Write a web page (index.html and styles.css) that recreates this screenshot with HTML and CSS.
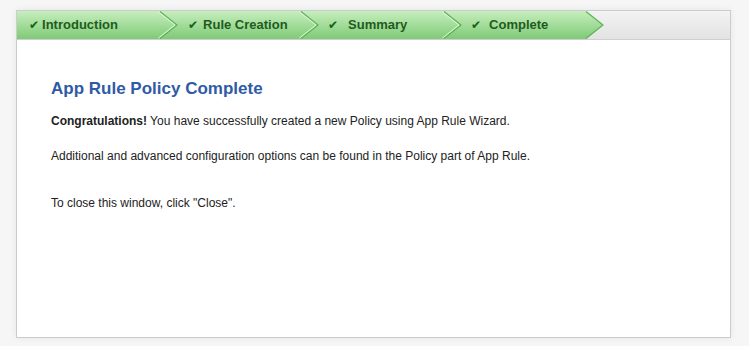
FILE: index.html
```html
<!DOCTYPE html>
<html>
<head>
<meta charset="utf-8">
<link rel="stylesheet" href="styles.css">
</head>
<body>
<div class="wizard">
  <div class="steps">
    <div class="step step-1"><span class="check">✔</span><span class="label">Introduction</span>
      <svg class="chev" width="19" height="28" viewBox="0 0 19 28"><defs><linearGradient id="g1" x1="0" y1="0" x2="0" y2="1"><stop offset="0" stop-color="#c6eebe"/><stop offset="1" stop-color="#7fca77"/></linearGradient></defs><path d="M0 0 L17 14 L0 28 Z" fill="url(#g1)"/><path d="M0 0.5 L17 14 L0 27.5" fill="none" stroke="#5cb455" stroke-width="1.2"/><path d="M-1.5 1 L15 14 L-1.5 27" fill="none" stroke="#e4f7df" stroke-width="1"/></svg>
    </div>
    <div class="step step-2"><span class="check">✔</span><span class="label">Rule Creation</span>
      <svg class="chev" width="19" height="28" viewBox="0 0 19 28"><path d="M0 0 L17 14 L0 28 Z" fill="url(#g1)"/><path d="M0 0.5 L17 14 L0 27.5" fill="none" stroke="#5cb455" stroke-width="1.2"/><path d="M-1.5 1 L15 14 L-1.5 27" fill="none" stroke="#e4f7df" stroke-width="1"/></svg>
    </div>
    <div class="step step-3"><span class="check">✔</span><span class="label">Summary</span>
      <svg class="chev" width="19" height="28" viewBox="0 0 19 28"><path d="M0 0 L17 14 L0 28 Z" fill="url(#g1)"/><path d="M0 0.5 L17 14 L0 27.5" fill="none" stroke="#5cb455" stroke-width="1.2"/><path d="M-1.5 1 L15 14 L-1.5 27" fill="none" stroke="#e4f7df" stroke-width="1"/></svg>
    </div>
    <div class="step step-4"><span class="check">✔</span><span class="label">Complete</span>
      <svg class="chev" width="19" height="28" viewBox="0 0 19 28"><path d="M0 0 L17 14 L0 28 Z" fill="url(#g1)"/><path d="M0 0.5 L17 14 L0 27.5" fill="none" stroke="#5cb455" stroke-width="1.2"/></svg>
    </div>
  </div>
  <div class="content">
    <h1 class="title">App Rule Policy Complete</h1>
    <p class="para p1"><b>Congratulations!</b> You have successfully created a new Policy using App Rule Wizard.</p>
    <p class="para p2">Additional and advanced configuration options can be found in the Policy part of App Rule.</p>
    <p class="para p3">To close this window, click "Close".</p>
  </div>
</div>
</body>
</html>
```

FILE: styles.css
```css
html, body {
  margin: 0;
  padding: 0;
}
body {
  background: #f6f6f6;
  font-family: "Liberation Sans", Arial, sans-serif;
  width: 749px;
  height: 346px;
  overflow: hidden;
}
.wizard {
  margin: 10px 0 0 16px;
  width: 713px;
  height: 326px;
  border: 1px solid #cccccc;
  background: #ffffff;
  box-shadow: 0 0 7px rgba(0, 0, 0, 0.07);
}
.steps {
  display: flex;
  height: 28px;
  border-bottom: 1px solid #cfcfcf;
  background: linear-gradient(#f3f3f3, #e3e3e3);
}
.step {
  position: relative;
  height: 28px;
  background: linear-gradient(#c6eebe, #7fca77);
  color: #1f5c1d;
  font-family: "Liberation Sans", Arial, sans-serif;
  font-weight: bold;
  font-size: 13px;
  line-height: 28px;
  box-sizing: border-box;
  white-space: nowrap;
}
.step-1 { width: 143px; padding-left: 12px; z-index: 4; }
.step-2 { width: 141px; padding-left: 28px; z-index: 3; }
.step-3 { width: 143px; padding-left: 27px; z-index: 2; }
.step-4 { width: 142px; padding-left: 27px; z-index: 1; }
.check {
  font-family: "DejaVu Sans", sans-serif;
  font-size: 12px;
  color: #176314;
  margin-right: 3px;
}
.step-2 .check { margin-right: 5px; }
.step-3 .check { margin-right: 10px; }
.step-4 .check { margin-right: 8px; }
.chev {
  position: absolute;
  top: 0;
  left: 100%;
  overflow: visible;
}
.content {
  padding: 39px 34px 0 34px;
}
.title {
  margin: 0 0 15px 0;
  font-size: 17px;
  line-height: 20px;
  font-weight: bold;
  color: #2f5ba6;
}
.para {
  margin: 0;
  font-size: 12px;
  line-height: 15px;
  color: #222222;
}
.p2 { margin-top: 20px; }
.p3 { margin-top: 32px; }
```
